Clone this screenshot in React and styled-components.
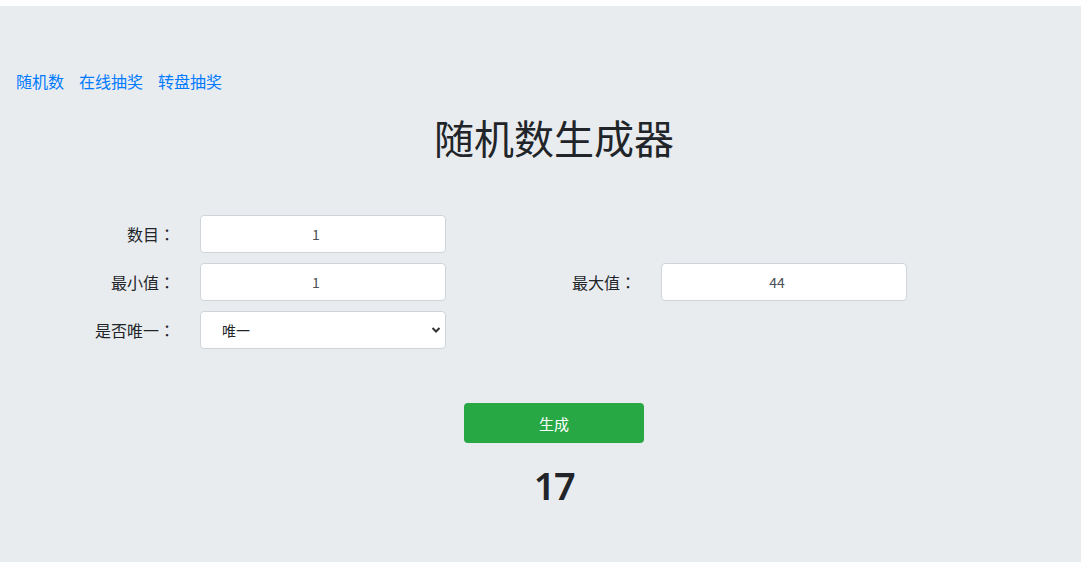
import styled, { createGlobalStyle } from 'styled-components';

const Global = createGlobalStyle`
    html, body {
        margin: 0;
        padding: 0;
        background: #fff;
    }
    body {
        font-family: "Noto Sans CJK SC", "Noto Sans", sans-serif;
        color: #212529;
    }
`

const Page = styled.div`
    margin-top: 6px;
    min-height: 556px;
    background-color: #e9ecef;
    padding-top: 63px;
    box-sizing: border-box;
`
const Nav = styled.nav`
    display: flex;
    gap: 15px;
    padding-left: 16px;
`
const NavLink = styled.a`
    font-size: 16px;
    line-height: 24px;
    color: #007bff;
    text-decoration: none;
`
const Main = styled.main`
    padding-left: 27px;
    display: flex;
    flex-direction: column;
    align-items: center;
`
const Title = styled.h1`
    margin: 20px 0 0;
    font-size: 40px;
    line-height: 48px;
    font-weight: 400;
    color: #212529;
`
const Form = styled.div`
    align-self: flex-start;
    margin-top: 54px;
    margin-left: -27px;
    display: grid;
    grid-template-columns: 175px 246px 165px 246px;
    column-gap: 25px;
    row-gap: 10px;
    align-items: center;
`
const Label = styled.label`
    font-size: 16px;
    line-height: 24px;
    text-align: right;
    color: #212529;
    grid-column: ${props => props.col || 1};
`
const Colon = styled.span`
    font-family: "Noto Sans CJK JP", sans-serif;
`
const Input = styled.input`
    box-sizing: border-box;
    width: 246px;
    height: 38px;
    padding: 0 14px 0 0;
    border: 1px solid #ced4da;
    border-radius: 4px;
    background: #fff;
    font-family: inherit;
    font-size: 14px;
    color: #495057;
    text-align: center;
    outline: none;
    grid-column: ${props => props.col || 2};
`
const SelectWrap = styled.div`
    position: relative;
    width: 246px;
    height: 38px;
    grid-column: 2;
`
const Select = styled.select`
    box-sizing: border-box;
    width: 100%;
    height: 100%;
    appearance: none;
    border: 1px solid #ced4da;
    border-radius: 4px;
    background: #fff;
    padding-left: 21px;
    font-family: inherit;
    font-size: 14px;
    color: #212529;
    outline: none;
`
const Chevron = styled.svg`
    position: absolute;
    right: 5px;
    top: 15px;
    pointer-events: none;
`
const Button = styled.button`
    margin-top: 54px;
    width: 180px;
    height: 40px;
    border: none;
    border-radius: 4px;
    background-color: #28a745;
    color: #fff;
    font-family: inherit;
    font-size: 15px;
`
const Result = styled.div`
    margin-top: 19px;
    font-family: "Noto Sans", sans-serif;
    font-size: 38px;
    line-height: 46px;
    font-weight: 600;
    letter-spacing: -1.5px;
    color: #212529;
`

const App = () => {
    return (
        <>
            <Global />
            <Page>
                <Nav>
                    <NavLink href="#">随机数</NavLink>
                    <NavLink href="#">在线抽奖</NavLink>
                    <NavLink href="#">转盘抽奖</NavLink>
                </Nav>
                <Main>
                    <Title>随机数生成器</Title>

                    <Form>
                        <Label>数目<Colon>：</Colon></Label>
                        <Input defaultValue="1" />

                        <Label>最小值<Colon>：</Colon></Label>
                        <Input defaultValue="1" />
                        <Label col={3}>最大值<Colon>：</Colon></Label>
                        <Input col={4} defaultValue="44" />

                        <Label>是否唯一<Colon>：</Colon></Label>
                        <SelectWrap>
                            <Select defaultValue="1">
                                <option value="1">唯一</option>
                                <option value="0">不唯一</option>
                            </Select>
                            <Chevron width="10" height="8" viewBox="0 0 10 8">
                                <path d="M1.5 2 L5 5.5 L8.5 2" fill="none" stroke="#333" strokeWidth="2" />
                            </Chevron>
                        </SelectWrap>
                    </Form>

                    <Button>生成</Button>
                    <Result>17</Result>
                </Main>
            </Page>
        </>
    )
}

export default App;
